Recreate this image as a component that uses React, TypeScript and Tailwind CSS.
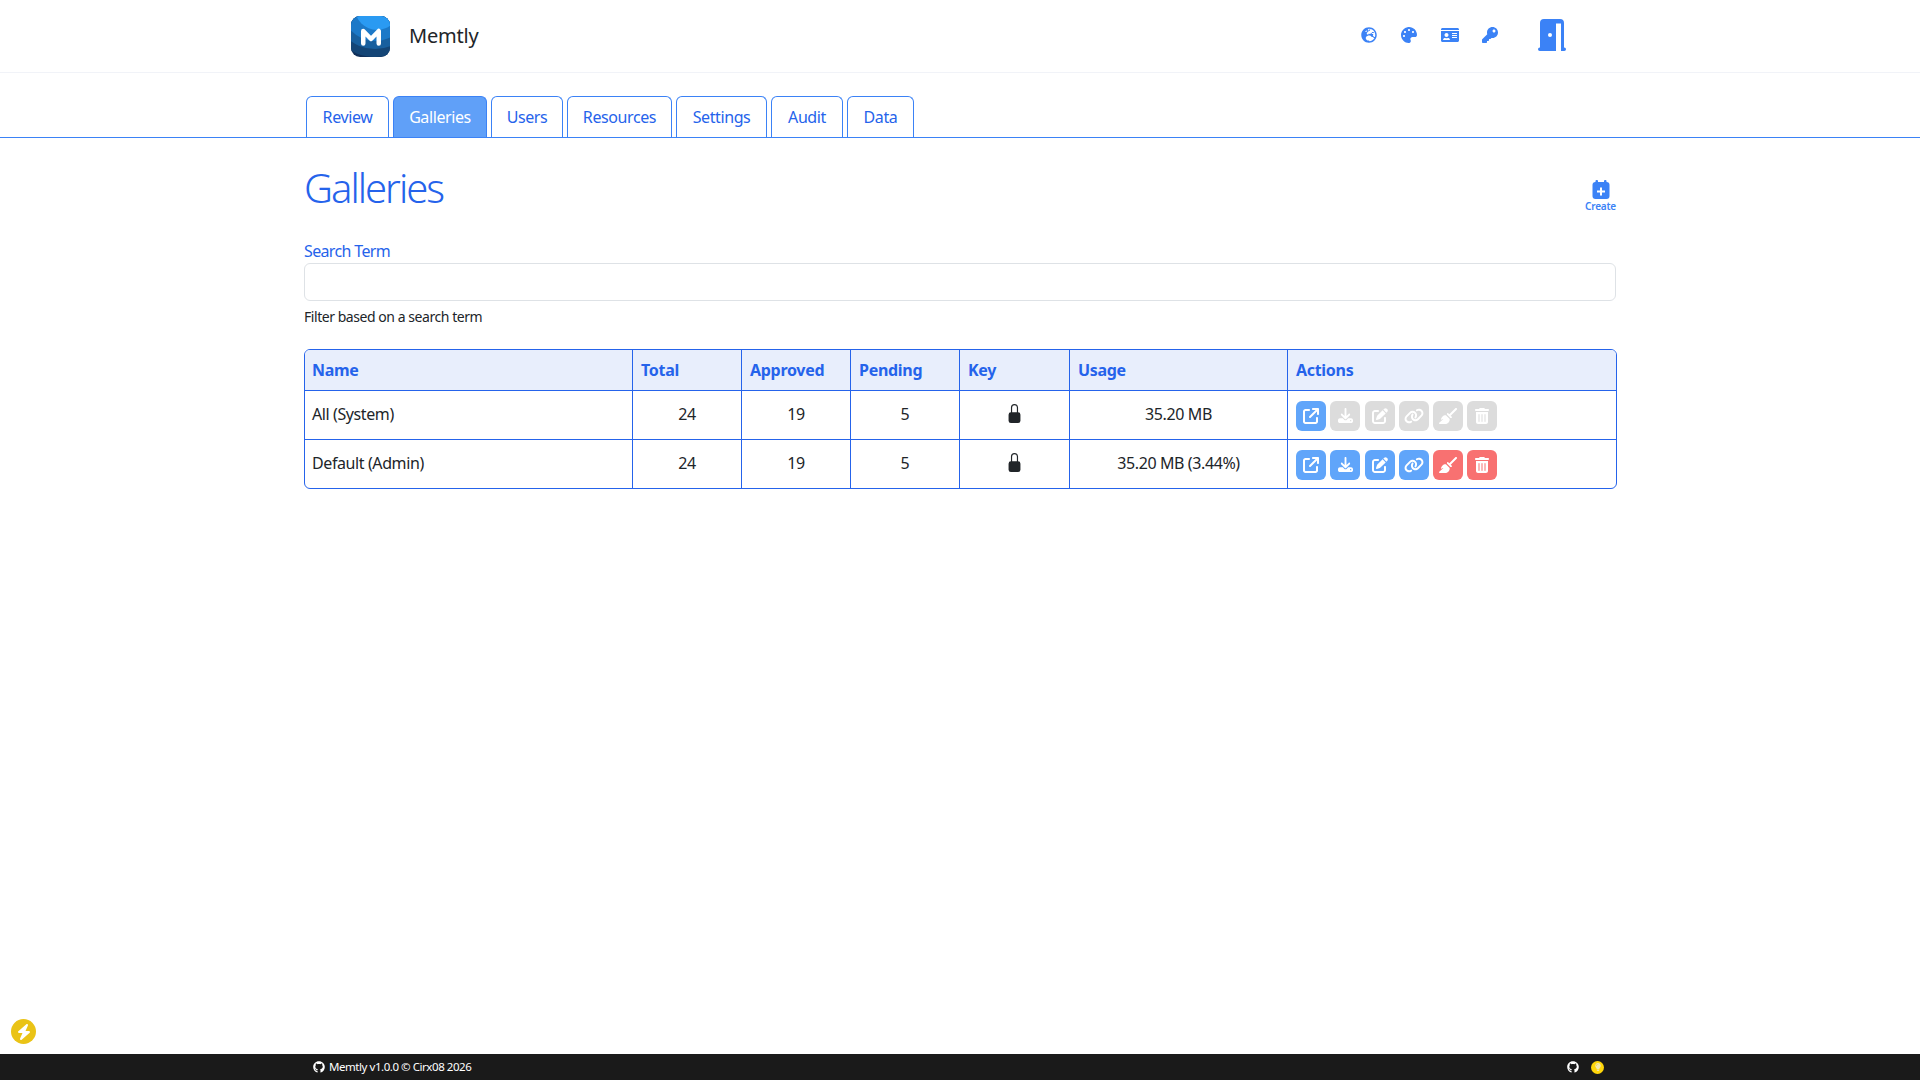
import { FaGlobeEurope, FaPalette, FaIdCard, FaKey, FaGithub, FaLightbulb } from "react-icons/fa";
import { FaBolt, FaArrowUpRightFromSquare, FaDownload, FaPenToSquare, FaLink, FaBroom, FaTrashCan } from "react-icons/fa6";
import { BsLockFill } from "react-icons/bs";

const ff = "font-['Noto_Sans','Open_Sans',sans-serif]";

const tabs = [
  { n: "Review", w: "w-[83px]" },
  { n: "Galleries", w: "w-[94px]", active: true },
  { n: "Users", w: "w-[72px]" },
  { n: "Resources", w: "w-[105px]" },
  { n: "Settings", w: "w-[91px]" },
  { n: "Audit", w: "w-[72px]" },
  { n: "Data", w: "w-[67px]" },
];

const cols = "grid-cols-[327px_109px_109px_109px_110px_218px_1fr]";

function ActionBtn({ icon: I, color, size }: { icon: React.ComponentType<{ className?: string }>; color: string; size: string }) {
  return (
    <span className={`flex h-[30px] w-[30px] items-center justify-center rounded-[6px] text-white ${color}`}>
      <I className={size} />
    </span>
  );
}

function Row({ name, usage, on, last }: { name: string; usage: string; on: boolean; last?: boolean }) {
  const blue = on ? "bg-[#60a5fa]" : "bg-[#dcdcdc]";
  const red = on ? "bg-[#f87171]" : "bg-[#dcdcdc]";
  const cell = "flex items-center justify-center border-l border-[#2563eb] pb-[3px]";
  return (
    <div className={`grid ${last ? "h-[48px]" : "h-[49px] border-b border-[#2563eb]"} ${cols} text-[16px] tracking-[-0.4px] text-[#212529]`}>
      <div className="flex items-center pb-[3px] pl-[7px]">{name}</div>
      <div className={cell}>24</div>
      <div className={cell}>19</div>
      <div className={cell}>5</div>
      <div className={cell}><BsLockFill className="h-[19px] w-[19px]" /></div>
      <div className={cell}>{usage}</div>
      <div className="flex items-center gap-[4.3px] border-l border-[#2563eb] pt-[1px] pl-[8px]">
        <ActionBtn icon={FaArrowUpRightFromSquare} color="bg-[#60a5fa]" size="h-[16px] w-[16px]" />
        <ActionBtn icon={FaDownload} color={blue} size="h-[15px] w-[15px]" />
        <ActionBtn icon={FaPenToSquare} color={blue} size="h-[16px] w-[16px]" />
        <ActionBtn icon={FaLink} color={blue} size="h-[16px] w-[20px]" />
        <ActionBtn icon={FaBroom} color={red} size="h-[16px] w-[18px]" />
        <ActionBtn icon={FaTrashCan} color={red} size="h-[16px] w-[14px]" />
      </div>
    </div>
  );
}

function Logo() {
  return (
    <svg viewBox="0 0 39 41" className="h-[41px] w-[39px] shrink-0">
      <defs>
        <clipPath id="logo-clip">
          <rect x="0" y="0" width="39" height="41" rx="9" />
        </clipPath>
      </defs>
      <g clipPath="url(#logo-clip)">
        <rect width="39" height="41" fill="#10305a" />
        <circle cx="24" cy="-8" r="49" fill="#144576" />
        <circle cx="24" cy="-8" r="41" fill="#185f9e" />
        <circle cx="24" cy="-8" r="33" fill="#1c79c8" />
        <circle cx="26" cy="-8" r="22" fill="#2a9af2" />
      </g>
      <path d="M12.25 27.5V15L20 23L27.75 15V27.5" fill="none" stroke="#fff" strokeWidth="4.5" strokeLinecap="round" strokeLinejoin="round" />
    </svg>
  );
}

function Door() {
  return (
    <svg viewBox="0 0 28 32" className="ml-[40px] h-[32px] w-[28px]" fill="currentColor">
      <path d="M2 28.5V4a4 4 0 0 1 4-4h16a4 4 0 0 1 4 4v24.5h.25a1.75 1.75 0 0 1 0 3.5H23V4.5h-5V32H1.75a1.75 1.75 0 0 1 0-3.5z" />
      <circle cx="12" cy="16" r="2" fill="#fff" />
    </svg>
  );
}

function CalendarAdd() {
  return (
    <svg viewBox="0 0 18 19" className="h-[19px] w-[18px]" fill="currentColor">
      <rect x="0.5" y="2" width="17" height="17" rx="3" />
      <rect x="3.5" y="0" width="2.5" height="4" rx="1" />
      <rect x="12" y="0" width="2.5" height="4" rx="1" />
      <path d="M8 7.5h2v3h3v2h-3v3H8v-3H5v-2h3z" fill="#fff" />
    </svg>
  );
}

export default function App() {
  return (
    <div className={`flex h-[1080px] w-[1920px] flex-col overflow-hidden bg-white ${ff}`}>
      <header className="flex h-[73px] shrink-0 items-center border-b border-[#f1f3f8] pr-[354px] pl-[351px]">
        <Logo />
        <span className="ml-[19px] text-[20px] tracking-[-0.2px] text-[#212529]">Memtly</span>
        <div className="ml-auto flex items-center pb-[2px] text-[#3b82f6]">
          <FaGlobeEurope className="h-[16px] w-[16px]" />
          <FaPalette className="ml-[24px] h-[16px] w-[16px]" />
          <FaIdCard className="ml-[24px] h-[16px] w-[18px]" />
          <FaKey className="ml-[23px] h-[16px] w-[16px]" />
          <Door />
        </div>
      </header>

      <nav className="mt-[23px] flex h-[42px] shrink-0 gap-[4px] border-b border-[#3b82f6] pl-[306px]">
        {tabs.map((t) => (
          <span key={t.n} className={`flex h-[41px] items-center justify-center rounded-t-[6px] border border-b-0 border-[#3b82f6] pb-[1px] text-[16px] tracking-[-0.4px] ${t.w} ${t.active ? "bg-[#60a0f8] text-white" : "bg-white text-[#2563eb]"}`}>
            {t.n}
          </span>
        ))}
      </nav>

      <main className="ml-[304px] flex w-[1313px] flex-1 flex-col">
        <div className="mt-[29px] flex h-[42px] items-start justify-between">
          <h1 className="text-[40px] leading-[42px] font-light tracking-[-2px] text-[#2563eb]">Galleries</h1>
          <div className="mt-[13px] mr-[1px] flex flex-col items-center text-[#3b82f6]">
            <CalendarAdd />
            <span className="mt-[1px] text-[10px] leading-[12px] font-semibold tracking-[-0.2px]">Create</span>
          </div>
        </div>

        <label className="mt-[31px] text-[16px] leading-[22px] tracking-[-0.65px] text-[#2563eb]">Search Term</label>
        <div className="mt-[1px] mr-[1px] h-[38px] rounded-[6px] border border-[#dee2e6] bg-white" />
        <p className="mt-[6px] text-[14px] leading-[19px] tracking-[-0.45px] text-[#212529]">Filter based on a search term</p>

        <div className="mt-[23px] overflow-hidden rounded-[6px] border border-[#2563eb]">
          <div className={`grid h-[41px] ${cols} items-stretch border-b border-[#2563eb] bg-[#e8eefc] text-[16px] font-bold tracking-[-0.3px] text-[#2563eb]`}>
            {["Name", "Total", "Approved", "Pending", "Key", "Usage", "Actions"].map((h, i) => (
              <div key={h} className={`flex items-center ${i ? "border-l border-[#2563eb] pl-2" : "pl-[7px]"}`}>{h}</div>
            ))}
          </div>
          <Row name="All (System)" usage="35.20 MB" on={false} />
          <Row name="Default (Admin)" usage="35.20 MB (3.44%)" on last />
        </div>
      </main>

      <span className="absolute top-[1019px] left-[11px] flex h-[25px] w-[25px] items-center justify-center rounded-full bg-[#eac316] text-white">
        <FaBolt className="h-[16px] w-[14px]" />
      </span>

      <footer className="flex h-[26px] shrink-0 items-center bg-[#1a1a1a] pr-[316px] pl-[313px] text-[11.5px] tracking-[-0.45px] text-white">
        <FaGithub className="h-[12px] w-[12px]" />
        <span className="ml-[4px]">Memtly v1.0.0 © Cirx08 2026</span>
        <FaGithub className="ml-auto h-[12px] w-[12px]" />
        <span className="ml-[12px] flex h-[13px] w-[13px] items-center justify-center rounded-full bg-[#ffd60a] text-[#f3e8b0]">
          <FaLightbulb className="h-[8px] w-[8px]" />
        </span>
      </footer>
    </div>
  );
}
